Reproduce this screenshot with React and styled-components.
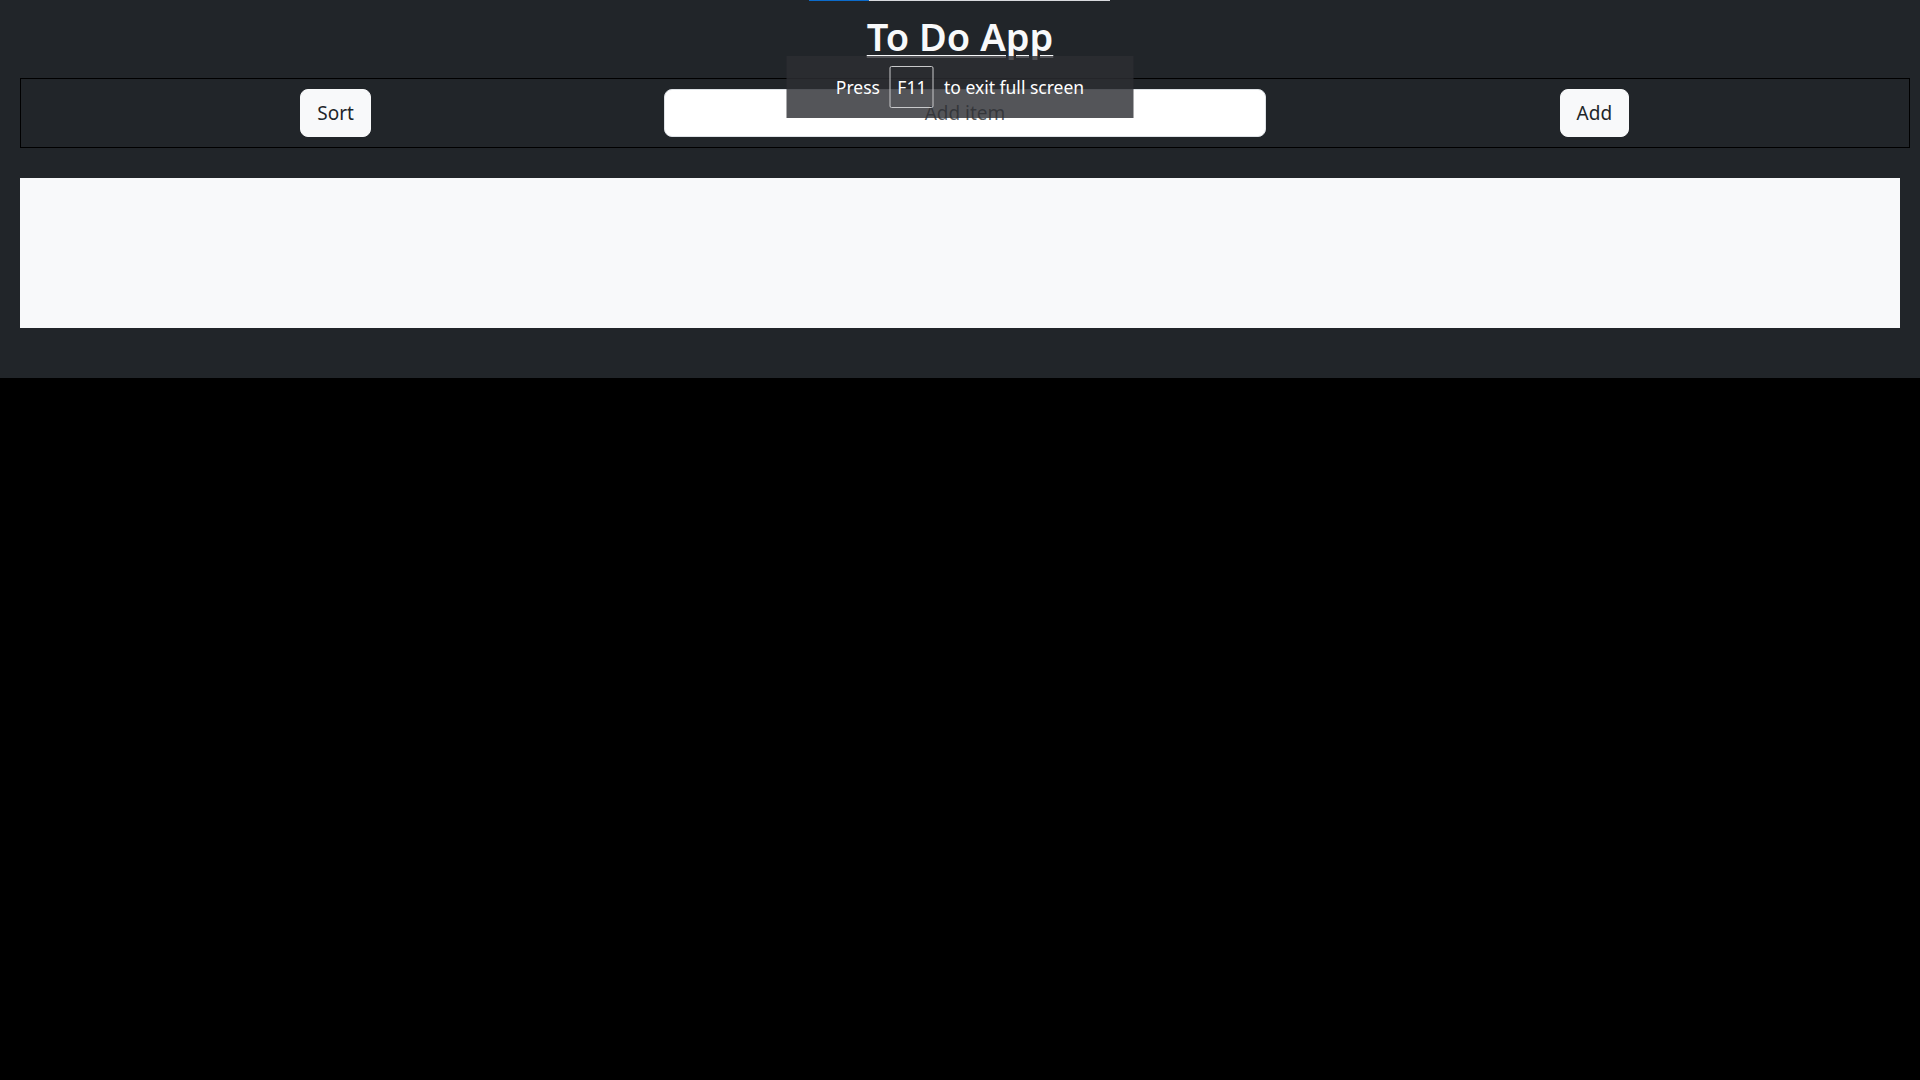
import React from 'react';
import styled, { createGlobalStyle } from 'styled-components';

const GlobalStyle = createGlobalStyle`
  * {
    box-sizing: border-box;
  }

  body {
    margin: 0;
    background: #000;
    font-family: 'Noto Sans', 'Open Sans', sans-serif;
    color: #f8f9fa;
  }
`;

const PageStyled = styled.div`
  background: #212529;
  padding: 12px 20px 50px;
`;

const TitleStyled = styled.h1`
  margin: 0 0 18px;
  text-align: center;
  font-size: 38px;
  font-weight: 600;
  line-height: 48px;
  color: #f8f9fa;

  span {
    text-decoration: underline;
    text-decoration-thickness: 3px;
    text-underline-offset: 4px;
  }
`;

const ToolbarStyled = styled.div`
  display: grid;
  grid-template-columns: repeat(3, 1fr);
  align-items: center;
  width: 1890px;
  padding: 10px 0;
  border: 1px solid #000;
`;

const CellStyled = styled.div`
  display: flex;
  justify-content: center;
  padding: 0 14px;
`;

const ButtonStyled = styled.button`
  height: 48px;
  padding: 0 16px;
  border: 1px solid #f8f9fa;
  border-radius: 8px;
  background: #f8f9fa;
  color: #212529;
  font-family: inherit;
  font-size: 19px;
  cursor: pointer;
`;

const InputStyled = styled.input`
  width: 100%;
  height: 48px;
  padding: 0 16px;
  border: 1px solid #dee2e6;
  border-radius: 8px;
  background: #fff;
  font-family: inherit;
  font-size: 19px;
  text-align: center;
  outline: none;

  &::placeholder {
    color: rgba(33, 37, 41, 0.75);
  }
`;

const ListStyled = styled.ul`
  margin: 30px 0 0;
  padding: 0;
  width: 1880px;
  height: 150px;
  background: #f8f9fa;
  list-style: none;
`;

const ProgressStyled = styled.div`
  position: absolute;
  top: 0;
  left: 809px;
  width: 301px;
  height: 1px;
  background: #d8dadd;

  &::before {
    content: '';
    display: block;
    width: 60px;
    height: 100%;
    background: #0b6bcb;
  }
`;

const NoticeStyled = styled.div`
  position: absolute;
  top: 56px;
  left: 50%;
  transform: translateX(-50%);
  display: flex;
  align-items: center;
  justify-content: center;
  gap: 10px;
  width: 347px;
  height: 62px;
  background: rgba(44, 46, 50, 0.81);
  color: #fff;
  font-size: 17.5px;
`;

const KeyStyled = styled.span`
  display: inline-flex;
  align-items: center;
  justify-content: center;
  width: 44px;
  height: 42px;
  border: 1px solid #c8c9cb;
  border-radius: 2px;
`;

export default function App() {
  return (
    <>
      <GlobalStyle />
      <PageStyled>
        <TitleStyled>
          <span>To Do App</span>
        </TitleStyled>
        <ToolbarStyled>
          <CellStyled>
            <ButtonStyled>Sort</ButtonStyled>
          </CellStyled>
          <CellStyled>
            <InputStyled placeholder='Add item' />
          </CellStyled>
          <CellStyled>
            <ButtonStyled>Add</ButtonStyled>
          </CellStyled>
        </ToolbarStyled>
        <ListStyled />
      </PageStyled>
      <ProgressStyled />
      <NoticeStyled>
        <span>Press</span>
        <KeyStyled>F11</KeyStyled>
        <span>to exit full screen</span>
      </NoticeStyled>
    </>
  );
}
